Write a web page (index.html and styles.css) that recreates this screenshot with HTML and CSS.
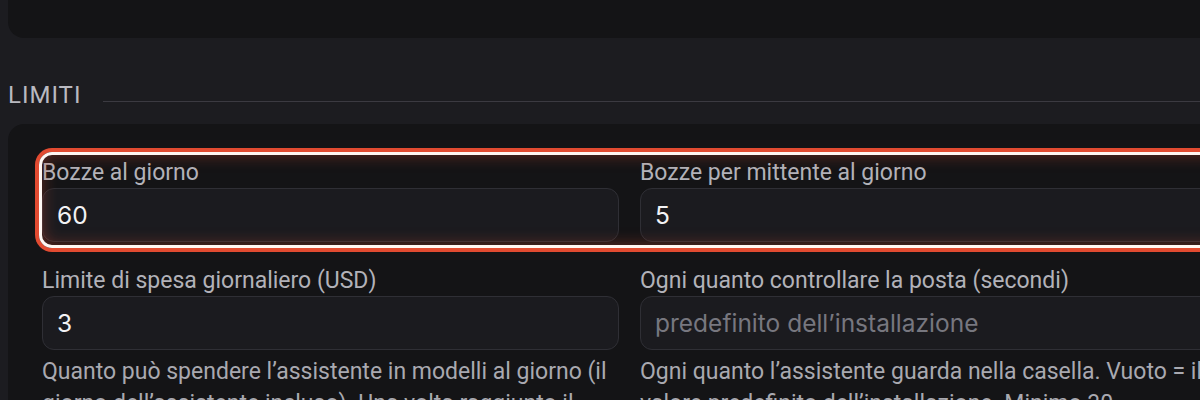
FILE: index.html
```html
<!DOCTYPE html>
<html lang="it">
<head>
    <meta charset="UTF-8">
    <meta name="viewport" content="width=device-width, initial-scale=1.0">
    <title>Limiti</title>
    <link rel="stylesheet" href="styles.css">
</head>
<body>
    <div class="page">
        <div class="card prev"></div>

        <div class="sectionHead">
            <h2>LIMITI</h2>
            <span class="rule"></span>
        </div>

        <div class="card fields">
            <div class="row flagged">
                <div class="field">
                    <label for="perDay">Bozze al giorno</label>
                    <input id="perDay" type="text" value="60">
                </div>
                <div class="field">
                    <label for="perSender">Bozze per mittente al giorno</label>
                    <input id="perSender" type="text" value="5">
                </div>
            </div>
            <div class="row">
                <div class="field">
                    <label for="spend">Limite di spesa giornaliero (USD)</label>
                    <input id="spend" type="text" value="3">
                    <p class="help">Quanto può spendere l’assistente in modelli al giorno (il giorno dell’assistente incluso). Una volta raggiunto il limite si ferma.</p>
                </div>
                <div class="field">
                    <label for="poll">Ogni quanto controllare la posta (secondi)</label>
                    <input id="poll" type="text" placeholder="predefinito dell’installazione">
                    <p class="help">Ogni quanto l’assistente guarda nella casella. Vuoto = il valore predefinito dell’installazione. Minimo 30.</p>
                </div>
            </div>
        </div>
    </div>
</body>
</html>
```

FILE: styles.css
```css
html, body {
    margin: 0;
    height: 100%;
    overflow: hidden;
}
body {
    background-color: #1c1c20;
    font-family: Roboto, "Noto Sans", sans-serif;
    color: #b3b3ba;
}
.page {
    width: 1247px;
    padding-left: 8px;
}
.card {
    background-color: #141416;
    border-radius: 16px;
}
.prev {
    height: 38px;
    border-radius: 0 0 16px 16px;
}
.sectionHead {
    display: flex;
    gap: 22px;
    margin-top: 43px;
    margin-bottom: 15px;
}
.sectionHead h2 {
    margin: 0;
    font-size: 24px;
    line-height: 28px;
    font-weight: 400;
    letter-spacing: 1px;
    color: #b9b9c0;
}
.rule {
    flex: 1;
    height: 1px;
    margin-top: 20px;
    background-color: #3b3a41;
}
.fields {
    padding: 34px 30px 34px 34px;
}
.row {
    display: grid;
    grid-template-columns: 577px 577px;
    column-gap: 21px;
}
.row + .row {
    margin-top: 24px;
}
.flagged {
    position: relative;
}
.flagged::after {
    content: "";
    position: absolute;
    top: -6px;
    left: -3px;
    right: -3px;
    bottom: -6px;
    border: 3.5px solid #fff6f2;
    border-radius: 13px;
    box-shadow: 0 0 0 4px #e24b31, inset 0 0 16px rgba(226, 75, 49, .4);
    pointer-events: none;
}
.field {
    display: flex;
    flex-direction: column;
}
.field label {
    font-size: 23px;
    line-height: 30px;
    color: #b2b2b9;
}
.field input {
    box-sizing: border-box;
    height: 54px;
    margin: 0;
    padding: 0 14px;
    background-color: #1b1b1f;
    border: 1px solid #2f2f35;
    border-radius: 12px;
    font-family: Inter, "Noto Sans", sans-serif;
    font-size: 24.5px;
    color: #f2f2f4;
    outline: none;
}
.field input::placeholder {
    color: #77777f;
}
.help {
    margin: 6px 0 0;
    font-size: 23px;
    line-height: 32px;
    color: #a9a9b0;
}
```
